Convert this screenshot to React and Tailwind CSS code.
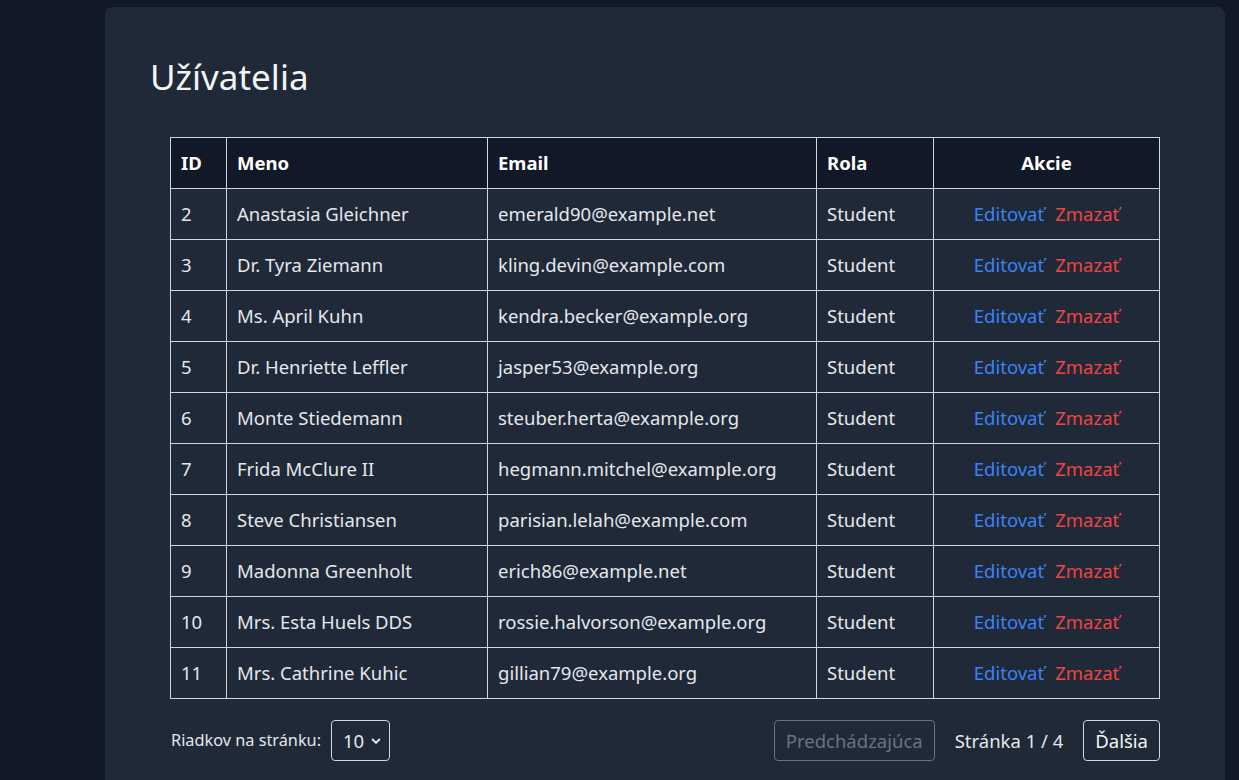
import React from 'react';

const users = [
  { id: 2, name: 'Anastasia Gleichner', email: 'emerald90@example.net' },
  { id: 3, name: 'Dr. Tyra Ziemann', email: 'kling.devin@example.com' },
  { id: 4, name: 'Ms. April Kuhn', email: 'kendra.becker@example.org' },
  { id: 5, name: 'Dr. Henriette Leffler', email: 'jasper53@example.org' },
  { id: 6, name: 'Monte Stiedemann', email: 'steuber.herta@example.org' },
  { id: 7, name: 'Frida McClure II', email: 'hegmann.mitchel@example.org' },
  { id: 8, name: 'Steve Christiansen', email: 'parisian.lelah@example.com' },
  { id: 9, name: 'Madonna Greenholt', email: 'erich86@example.net' },
  { id: 10, name: 'Mrs. Esta Huels DDS', email: 'rossie.halvorson@example.org' },
  { id: 11, name: 'Mrs. Cathrine Kuhic', email: 'gillian79@example.org' },
];

export default function App() {
  return (
    <div className="min-h-screen bg-[#111827] pt-[7px] pl-[105px] overflow-hidden" style={{ fontFamily: '"Noto Sans", "Open Sans", sans-serif' }}>
      <div className="w-[1120px] min-h-[800px] bg-[#1f2937] rounded-lg pt-[46px] px-[44px] text-gray-200">
        <h1 className="text-[35px] leading-[48px] font-normal text-gray-100 ml-[1px]">Užívatelia</h1>

        <div className="mx-[21px] mt-[36px]">
          <table className="w-[989px] border-collapse table-fixed text-[18.5px]">
            <colgroup>
              <col className="w-[56px]" />
              <col className="w-[261px]" />
              <col className="w-[329px]" />
              <col className="w-[117px]" />
              <col className="w-[226px]" />
            </colgroup>
            <thead>
              <tr className="bg-[#111827] text-white">
                <th className="border border-gray-300 px-[10px] py-[13px] text-left font-bold leading-6">ID</th>
                <th className="border border-gray-300 px-[10px] py-[13px] text-left font-bold leading-6">Meno</th>
                <th className="border border-gray-300 px-[10px] py-[13px] text-left font-bold leading-6">Email</th>
                <th className="border border-gray-300 px-[10px] py-[13px] text-left font-bold leading-6">Rola</th>
                <th className="border border-gray-300 px-[10px] py-[13px] text-center font-bold leading-6">Akcie</th>
              </tr>
            </thead>
            <tbody>
              {users.map((u) => (
                <tr key={u.id}>
                  <td className="border border-gray-300 px-[10px] py-[13px] leading-6">{u.id}</td>
                  <td className="border border-gray-300 px-[10px] py-[13px] leading-6">{u.name}</td>
                  <td className="border border-gray-300 px-[10px] py-[13px] leading-6">{u.email}</td>
                  <td className="border border-gray-300 px-[10px] py-[13px] leading-6">Student</td>
                  <td className="border border-gray-300 px-[10px] py-[13px] leading-6 text-center">
                    <span className="text-[#3b82f6]">Editovať</span>
                    <span className="text-[#ef4444] ml-[11px]">Zmazať</span>
                  </td>
                </tr>
              ))}
            </tbody>
          </table>

          <div className="flex items-center justify-between mt-[21px]">
            <div className="flex items-center gap-[10px] text-[16.3px]">
              <span className="ml-[1px]">Riadkov na stránku:</span>
              <div className="flex items-center h-[41px] w-[59px] border border-gray-300 rounded-[4px] pl-[11px] gap-[6px] text-[18.5px]">
                <span>10</span>
                <svg width="12" height="12" viewBox="0 0 16 16" fill="none" stroke="currentColor" strokeWidth="2.6" strokeLinecap="round" strokeLinejoin="round">
                  <path d="M3.5 6l4.5 4.5L12.5 6" />
                </svg>
              </div>
            </div>
            <div className="flex items-center">
              <button className="h-[41px] px-[11px] border border-gray-500 rounded-[4px] text-gray-500 text-[18.5px]">Predchádzajúca</button>
              <span className="mx-5 text-[18.5px]">Stránka 1 / 4</span>
              <button className="h-[41px] px-[11px] border border-gray-300 rounded-[4px] text-gray-100 text-[18.5px]">Ďalšia</button>
            </div>
          </div>
        </div>
      </div>
    </div>
  );
}
